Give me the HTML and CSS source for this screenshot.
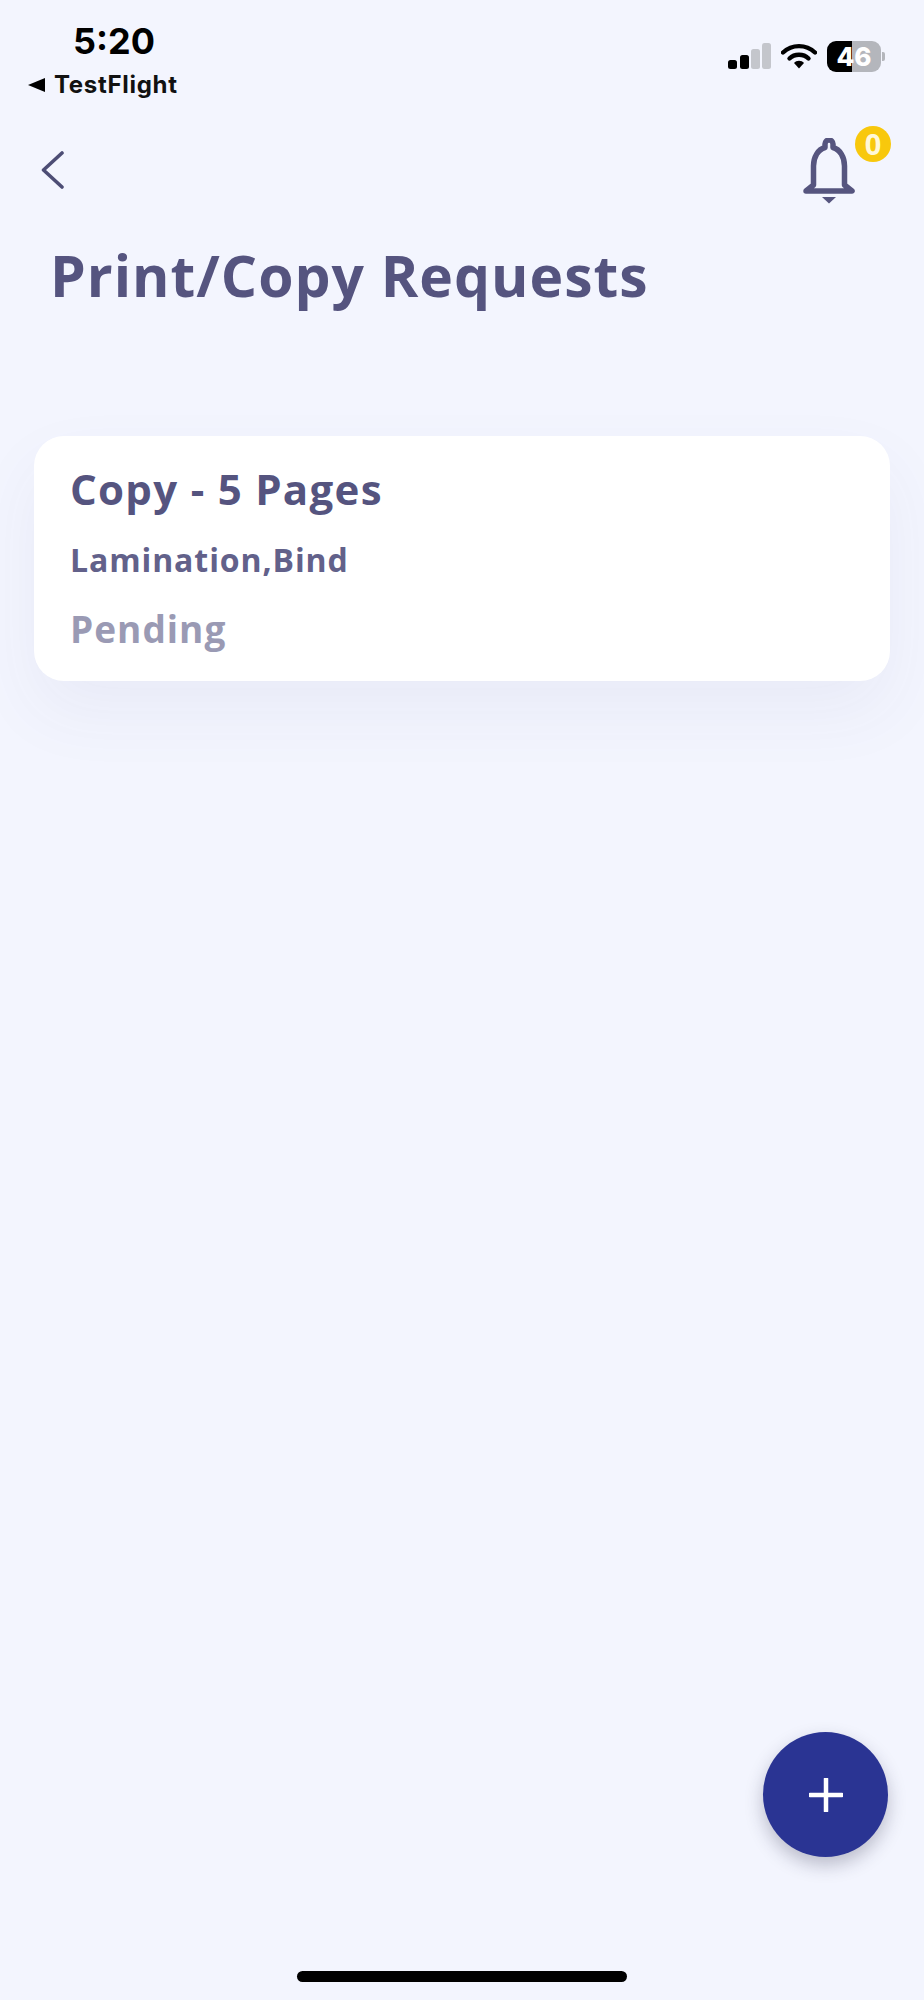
FILE: index.html
```html
<!DOCTYPE html>
<html>
  <head>
    <title>Print/Copy Requests</title>
    <meta name="viewport" content="width=device-width, initial-scale=1">
    <link rel="stylesheet" href="styles.css">
  </head>
  <body>
    <div id="screen">
      <div class="status-bar">
        <div class="status-left">
          <div class="time">5:20</div>
          <div class="back-app"><span class="back-tri"></span>TestFlight</div>
        </div>
        <div class="status-right">
          <svg class="signal" width="43" height="26" viewBox="0 0 43 26">
            <rect x="0" y="17" width="9" height="9" rx="2.5" fill="#000"/>
            <rect x="12" y="12" width="9" height="14" rx="2.5" fill="#000"/>
            <rect x="23" y="6" width="9" height="20" rx="2.5" fill="#c4c6cc"/>
            <rect x="34" y="0" width="9" height="26" rx="2.5" fill="#c4c6cc"/>
          </svg>
          <svg class="wifi" width="36" height="26" viewBox="0 0 36 26">
            <path d="M2 9.500C11 1 25 1 34 9.500" fill="none" stroke="#000" stroke-width="4.4" stroke-linecap="round"/>
            <path d="M8.500 15.500C13.500 10.500 22.500 10.500 27.500 15.500" fill="none" stroke="#000" stroke-width="4.4" stroke-linecap="round"/>
            <path d="M13 20C15.500 17 20.500 17 23 20L18 25.500Z" fill="#000"/>
          </svg>
          <div class="battery">
            <div class="battery-body"><span class="battery-level">46</span></div>
            <span class="battery-cap"></span>
          </div>
        </div>
      </div>

      <div class="top-bar">
        <svg class="back" width="23" height="38" viewBox="0 0 23 38">
          <path d="M21 2L2.500 19L21 36" fill="none" stroke="#4d4d75" stroke-width="3.6" stroke-linecap="round" stroke-linejoin="round"/>
        </svg>
        <div class="bell-wrap">
          <svg class="bell" width="54" height="66" viewBox="0 0 54 66">
            <path d="M27 2a4 4 0 0 1 4 4v3.500C38 11.500 42.500 19 42.500 28V47L50 53H4L11.500 47V28C11.500 19 16 11.500 23 9.500V6a4 4 0 0 1 4-4Z" fill="none" stroke="#56557f" stroke-width="5.500" stroke-linejoin="round"/>
            <path d="M20 59H34L27 65.500Z" fill="#56557f"/>
          </svg>
          <span class="badge">0</span>
        </div>
      </div>

      <h1>Print/Copy Requests</h1>

      <div class="card">
        <h2>Copy - 5 Pages</h2>
        <p class="options">Lamination,Bind</p>
        <p class="state">Pending</p>
      </div>

      <div class="home-bar"></div>

      <button class="fab">
        <svg width="34" height="34" viewBox="0 0 34 34">
          <path d="M1 17H33M17 1V33" stroke="#fff" stroke-width="4.500" stroke-linecap="round"/>
        </svg>
      </button>
    </div>
  </body>
</html>
```

FILE: styles.css
```css
body {
  margin: 0;
  background-color: #f3f5fe;
  font-family: "Open Sans", "Noto Sans", sans-serif;
}
#screen {
  position: relative;
  display: flex;
  flex-direction: column;
  width: 924px;
  height: 2000px;
  overflow: hidden;
}
.status-bar {
  display: flex;
  justify-content: space-between;
  height: 104px;
  padding: 22px 39px 0 28px;
  box-sizing: border-box;
}
.time {
  margin-left: 45px;
  font-family: Inter, "Liberation Sans", sans-serif;
  font-size: 36px;
  line-height: 38px;
  font-weight: 700;
  color: #000;
}
.back-app {
  display: flex;
  align-items: center;
  gap: 9px;
  margin-top: 11px;
  font-family: Inter, "Liberation Sans", sans-serif;
  font-size: 24px;
  line-height: 28px;
  font-weight: 700;
  letter-spacing: 0.7px;
  color: #111;
}
.back-tri {
  width: 0;
  height: 0;
  border-top: 7px solid transparent;
  border-bottom: 7px solid transparent;
  border-right: 17px solid #000;
}
.status-right {
  display: flex;
  align-items: center;
  gap: 10px;
  height: 32px;
  margin-top: 18px;
}
.battery {
  display: flex;
  align-items: center;
  gap: 1px;
}
.battery-body {
  width: 54px;
  height: 31px;
  border-radius: 9px;
  background: linear-gradient(to right, #000 0, #000 46%, #b4b6bc 46%, #b4b6bc 100%);
  text-align: center;
}
.battery-level {
  font-family: Inter, "Liberation Sans", sans-serif;
  font-size: 26px;
  line-height: 31px;
  font-weight: 800;
  color: #fff;
}
.battery-cap {
  width: 3px;
  height: 9px;
  border-radius: 0 2px 2px 0;
  background-color: #b4b6bc;
}
.top-bar {
  display: flex;
  justify-content: space-between;
  padding: 34px 0 0 41px;
  height: 110px;
  box-sizing: border-box;
}
.back {
  margin-top: 13px;
}
.bell-wrap {
  position: relative;
  margin-right: 68px;
}
.badge {
  position: absolute;
  top: -12px;
  right: -35px;
  width: 36px;
  height: 36px;
  border-radius: 50%;
  background-color: #f8c80c;
  color: #fff8d8;
  font-size: 29px;
  line-height: 36px;
  font-weight: 700;
  text-align: center;
}
h1 {
  margin: 26px 0 0 50px;
  font-size: 57px;
  line-height: 70px;
  font-weight: 700;
  letter-spacing: 1px;
  color: #55547f;
}
.card {
  margin: 126px 34px 0 34px;
  height: 245px;
  padding: 27px 36px 0;
  box-sizing: border-box;
  border-radius: 30px;
  background-color: #fff;
  box-shadow: 0 30px 70px rgba(70, 70, 130, 0.06);
}
.card h2 {
  margin: 0;
  font-size: 42px;
  line-height: 52px;
  font-weight: 700;
  letter-spacing: 1.300px;
  color: #55547f;
}
.options {
  margin: 24px 0 0;
  font-size: 32px;
  line-height: 42px;
  font-weight: 700;
  letter-spacing: 0.9px;
  color: #62618a;
}
.state {
  margin: 25px 0 0;
  font-size: 37px;
  line-height: 46px;
  font-weight: 700;
  letter-spacing: 1px;
  color: #9a9ab4;
}
.home-bar {
  width: 330px;
  height: 11px;
  margin: auto auto 18px;
  border-radius: 6px;
  background-color: #000;
}
.fab {
  position: absolute;
  left: 763px;
  top: 1732px;
  display: flex;
  align-items: center;
  justify-content: center;
  width: 125px;
  height: 125px;
  padding: 0;
  border: 0;
  border-radius: 50%;
  background-color: #2a3493;
  box-shadow: 0 8px 18px rgba(40, 40, 70, 0.28);
}
```
